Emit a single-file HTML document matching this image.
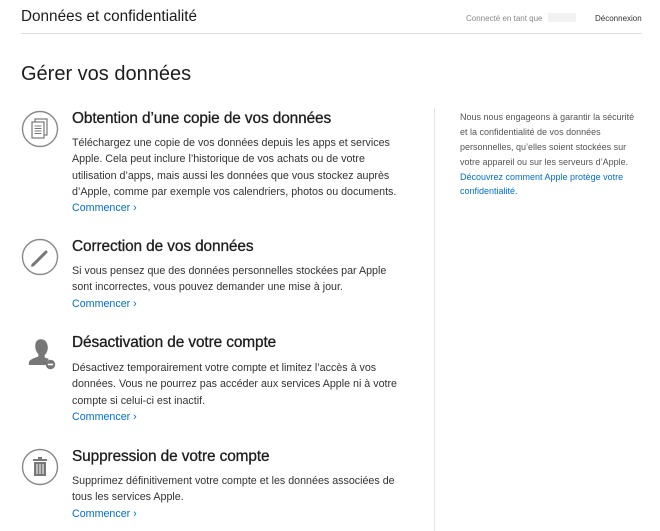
<!DOCTYPE html>
<html><head><meta charset="utf-8"><style>
*{margin:0;padding:0;box-sizing:border-box}
body{width:660px;height:531px;overflow:hidden;background:#fff;font-family:"Liberation Sans",sans-serif;color:#1d1d1f;position:relative}
.a{position:absolute;white-space:nowrap}
h2{position:absolute;left:72px;font-size:15.4px;font-weight:normal;color:#1d1d1f;letter-spacing:-0.1px;-webkit-text-stroke:0.3px #1d1d1f}
.b{position:absolute;left:72px;font-size:10.7px;line-height:16.3px;color:#333;white-space:nowrap}
.b a{color:#0070c9;text-decoration:none;display:block}
.ic{position:absolute;left:21px}
</style></head><body>
<div class="a" style="left:21px;top:8px;font-size:15.3px;color:#1d1d1f">Données et confidentialité</div>
<div class="a" style="left:466px;top:14px;font-size:8px;color:#888">Connecté en tant que</div>
<div class="a" style="left:548px;top:13px;width:28px;height:9px;background:#f2f2f2"></div>
<div class="a" style="left:595px;top:14px;font-size:8px;color:#333">Déconnexion</div>
<div class="a" style="left:21px;top:33px;width:621px;height:1px;background:#ddd"></div>
<div class="a" style="left:21px;top:63px;font-size:20px;color:#1d1d1f">Gérer vos données</div>
<div class="a" style="left:434px;top:108px;width:1px;height:423px;background:#e5e5e5"></div>

<svg class="ic" style="top:110px" width="38" height="38" viewBox="0 0 38 38"><circle cx="19" cy="19" r="17.5" fill="none" stroke="#888" stroke-width="1.4"/><rect x="14" y="9" width="12" height="16" fill="#fff" stroke="#777" stroke-width="1.2"/><rect x="11" y="12" width="12" height="16" fill="#fff" stroke="#777" stroke-width="1.2"/><path d="M13.5 16h7M13.5 18.5h7M13.5 21h7M13.5 23.5h7" stroke="#777" stroke-width="1"/></svg>
<h2 style="top:110px">Obtention d’une copie de vos données</h2>
<div class="b" style="top:135px">Téléchargez une copie de vos données depuis les apps et services<br>Apple. Cela peut inclure l’historique de vos achats ou de votre<br>utilisation d’apps, mais aussi les données que vous stockez auprès<br>d’Apple, comme par exemple vos calendriers, photos ou documents.<a>Commencer ›</a></div>

<svg class="ic" style="top:238px" width="38" height="38" viewBox="0 0 38 38"><circle cx="19" cy="19" r="17.5" fill="none" stroke="#888" stroke-width="1.4"/><path d="M12 27l13-13" stroke="#777" stroke-width="3" stroke-linecap="round"/><path d="M10.5 28.5l1.5-3" stroke="#777" stroke-width="1.5"/></svg>
<h2 style="top:238px">Correction de vos données</h2>
<div class="b" style="top:263px">Si vous pensez que des données personnelles stockées par Apple<br>sont incorrectes, vous pouvez demander une mise à jour.<a>Commencer ›</a></div>

<svg class="ic" style="top:335px" width="40" height="40" viewBox="0 0 38 38"><path d="M19 4c-4 0-5.5 3-5.5 6.5 0 3.5 1.5 6.5 3 7.5v2.5c-3 1-8 2.5-9 5v3h18c-1-2-1-4 1-5.5-1-.8-3-1.300-4-1.5v-2.5c1.5-1 3-4 3-7.5C25 7 23 4 19 4z" fill="#777"/><circle cx="28" cy="28" r="4.5" fill="#777"/><path d="M25.5 28h5" stroke="#fff" stroke-width="1.5"/></svg>
<h2 style="top:334px">Désactivation de votre compte</h2>
<div class="b" style="top:360px">Désactivez temporairement votre compte et limitez l’accès à vos<br>données. Vous ne pourrez pas accéder aux services Apple ni à votre<br>compte si celui-ci est inactif.<a>Commencer ›</a></div>

<svg class="ic" style="top:448px" width="38" height="38" viewBox="0 0 38 38"><circle cx="19" cy="19" r="17.5" fill="none" stroke="#888" stroke-width="1.4"/><rect x="12" y="11" width="14" height="2" fill="#777"/><rect x="17" y="9" width="4" height="2" fill="#777"/><rect x="13" y="14" width="12" height="14" fill="#777"/><path d="M16 16v10M19 16v10M22 16v10" stroke="#fff" stroke-width="1"/></svg>
<h2 style="top:448px">Suppression de votre compte</h2>
<div class="b" style="top:473px">Supprimez définitivement votre compte et les données associées de<br>tous les services Apple.<a>Commencer ›</a></div>

<div class="a" style="left:460px;top:110px;font-size:9px;line-height:15px;color:#555">Nous nous engageons à garantir la sécurité<br>et la confidentialité de vos données<br>personnelles, qu’elles soient stockées sur<br>votre appareil ou sur les serveurs d’Apple.</div>
<div class="a" style="left:460px;top:170px;font-size:9px;line-height:14px;color:#0070c9">Découvrez comment Apple protège votre<br>confidentialité.</div>
</body></html>
